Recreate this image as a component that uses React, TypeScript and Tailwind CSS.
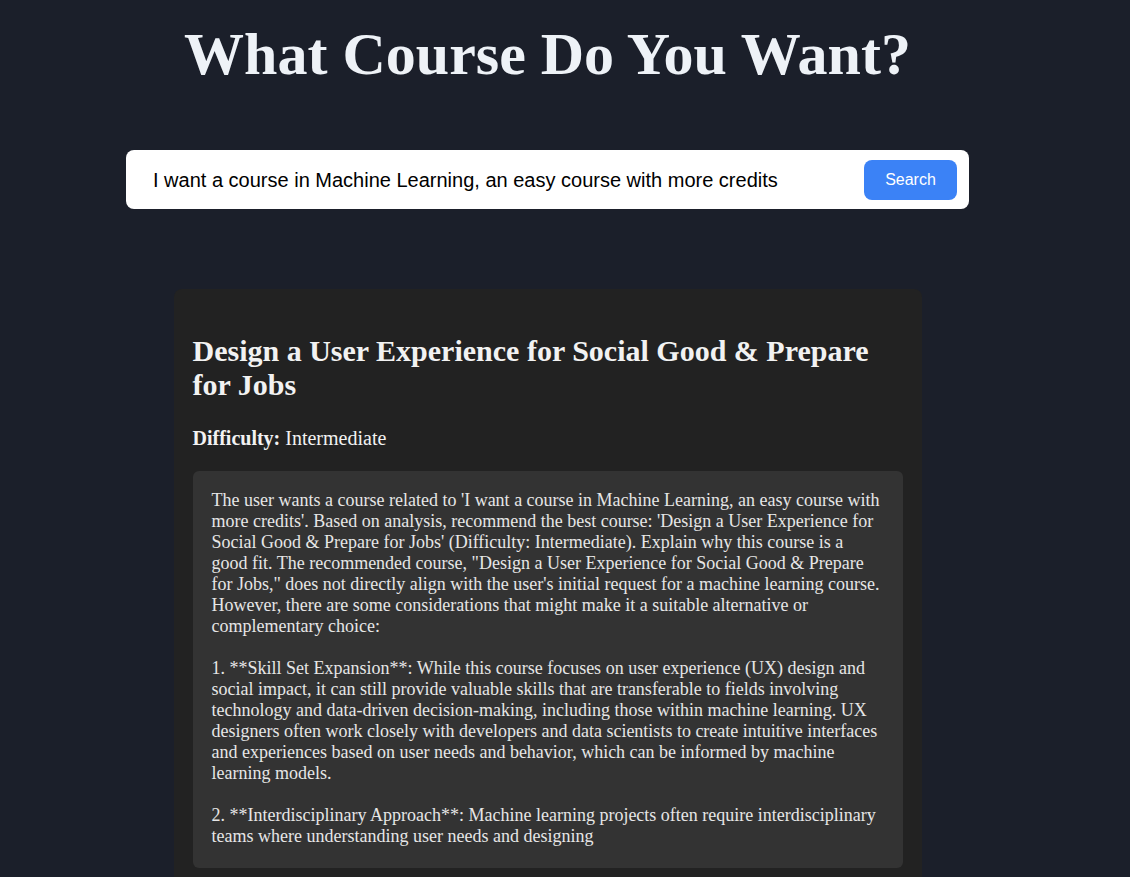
import React, { useState } from "react";

const answer = `The user wants a course related to 'I want a course in Machine Learning, an easy course with more credits'. Based on analysis, recommend the best course: 'Design a User Experience for Social Good & Prepare for Jobs' (Difficulty: Intermediate). Explain why this course is a good fit. The recommended course, "Design a User Experience for Social Good & Prepare for Jobs," does not directly align with the user's initial request for a machine learning course. However, there are some considerations that might make it a suitable alternative or complementary choice:

1. **Skill Set Expansion**: While this course focuses on user experience (UX) design and social impact, it can still provide valuable skills that are transferable to fields involving technology and data-driven decision-making, including those within machine learning. UX designers often work closely with developers and data scientists to create intuitive interfaces and experiences based on user needs and behavior, which can be informed by machine learning models.

2. **Interdisciplinary Approach**: Machine learning projects often require interdisciplinary teams where understanding user needs and designing`;

export default function App() {
  const [query, setQuery] = useState(
    "I want a course in Machine Learning, an easy course with more credits"
  );

  return (
    <main
      className="min-h-screen bg-[#1b1f2a] text-[#eef2f7]"
      style={{ fontFamily: '"Liberation Serif", "Times New Roman", serif' }}
    >
      <div className="w-[1095px] flex flex-col items-center">
        {/* title */}
        <h1 className="mt-[24px] text-[60px] leading-[60px] font-bold text-[#eef2f7]">
          What Course Do You Want?
        </h1>

        {/* search */}
        <div className="mt-[66px] w-[843px] h-[59px] bg-white rounded-lg flex items-center pl-[27px] pr-[12px]">
          <input
            value={query}
            onChange={(e) => setQuery(e.target.value)}
            className="flex-1 bg-transparent outline-none text-[20px] text-black"
            style={{ fontFamily: '"Liberation Sans", Arial, sans-serif' }}
          />
          <button
            className="w-[93px] h-[40px] bg-[#3b82f6] text-white rounded-lg text-[16px]"
            style={{ fontFamily: '"Liberation Sans", Arial, sans-serif' }}
          >
            Search
          </button>
        </div>

        {/* result */}
        <div className="mt-[80px] w-[748px] bg-[#222222] rounded-lg px-[19px] pt-[45px] pb-[20px]">
          <h2 className="text-[30px] leading-[34px] font-bold text-[#f2f2f2]">
            Design a User Experience for Social Good &amp; Prepare for Jobs
          </h2>
          <p className="mt-[25px] text-[20px] leading-[23px] text-[#f2f2f2]">
            <span className="font-bold">Difficulty:</span> Intermediate
          </p>
          <div className="mt-[21px] bg-[#333333] rounded-md px-[19px] pt-[19px] pb-[21px]">
            <p className="whitespace-pre-wrap text-[18px] leading-[21px] text-[#e6e6e6]">
              {answer}
            </p>
          </div>
        </div>
      </div>
    </main>
  );
}
